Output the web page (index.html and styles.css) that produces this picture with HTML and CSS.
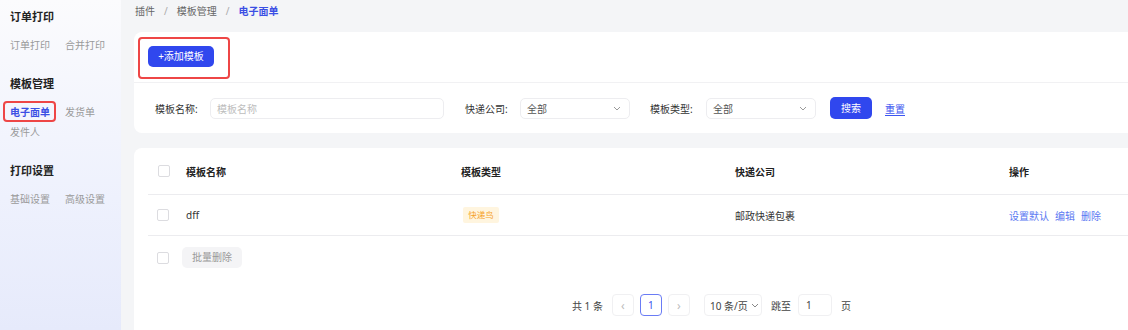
FILE: index.html
```html
<!DOCTYPE html>
<html lang="zh-CN">
<head>
<meta charset="utf-8">
<title>电子面单</title>
<link rel="stylesheet" href="styles.css">
</head>
<body>
<div class="app">
  <aside class="side">
    <div class="grp">
      <div class="grp-title">订单打印</div>
      <div class="grp-items">
        <span class="item">订单打印</span>
        <span class="item">合并打印</span>
      </div>
    </div>
    <div class="grp">
      <div class="grp-title">模板管理</div>
      <div class="grp-items">
        <span class="item active">电子面单</span>
        <span class="item">发货单</span>
        <span class="item">发件人</span>
      </div>
    </div>
    <div class="grp">
      <div class="grp-title">打印设置</div>
      <div class="grp-items">
        <span class="item">基础设置</span>
        <span class="item">高级设置</span>
      </div>
    </div>
  </aside>

  <main class="main">
    <nav class="crumb">
      <span>插件</span><span class="sep">/</span><span>模板管理</span><span class="sep">/</span><span class="cur">电子面单</span>
    </nav>

    <section class="card top-card">
      <div class="toolbar">
        <div class="mark">
          <button class="btn primary add">+添加模板</button>
        </div>
      </div>
      <div class="filters">
        <label class="lbl l1">模板名称:</label>
        <div class="input wide"><span class="ph">模板名称</span></div>
        <label class="lbl l2">快递公司:</label>
        <div class="input select"><span>全部</span>
          <svg class="chev" width="8" height="5" viewBox="0 0 8 5"><path d="M1 1l3 3 3-3" fill="none" stroke="#9a9a9a" stroke-width="1"/></svg>
        </div>
        <label class="lbl l3">模板类型:</label>
        <div class="input select"><span>全部</span>
          <svg class="chev" width="8" height="5" viewBox="0 0 8 5"><path d="M1 1l3 3 3-3" fill="none" stroke="#9a9a9a" stroke-width="1"/></svg>
        </div>
        <button class="btn primary search">搜索</button>
        <a class="reset">重置</a>
      </div>
    </section>

    <section class="card table-card">
      <div class="row head">
        <div class="c0"><span class="cb"></span></div>
        <div class="c">模板名称</div>
        <div class="c">模板类型</div>
        <div class="c">快递公司</div>
        <div class="c">操作</div>
      </div>
      <div class="row body">
        <div class="c0"><span class="cb"></span></div>
        <div class="c">dff</div>
        <div class="c"><span class="tag">快递鸟</span></div>
        <div class="c">邮政快递包裹</div>
        <div class="c ops"><a>设置默认</a><a>编辑</a><a>删除</a></div>
      </div>
      <div class="foot">
        <span class="cb"></span>
        <button class="btn ghost">批量删除</button>
      </div>
      <div class="pager">
        <span class="total">共 1 条</span>
        <span class="pg arrow">‹</span>
        <span class="pg on">1</span>
        <span class="pg arrow">›</span>
        <span class="size">10 条/页
          <svg width="8" height="5" viewBox="0 0 8 5"><path d="M1 1l3 3 3-3" fill="none" stroke="#888" stroke-width="1"/></svg>
        </span>
        <span class="jump">跳至</span>
        <span class="jin">1</span>
        <span class="unit">页</span>
      </div>
    </section>
  </main>
</div>
</body>
</html>
```

FILE: styles.css
```css
* { box-sizing: border-box; }
html, body {
  margin: 0;
  width: 1128px;
  height: 330px;
  overflow: hidden;
}
body {
  font-family: "Noto Sans", "Noto Sans CJK SC", sans-serif;
  font-size: 10px;
  color: #333;
  background: #f4f5f7;
}
button { font-family: inherit; border: 0; cursor: pointer; }

.app {
  display: flex;
  height: 330px;
  overflow: hidden;
}

/* sidebar */
.side {
  width: 121px;
  flex: none;
  padding: 8px 0 0 10px;
  background: linear-gradient(180deg, #fbfbfd 0%, #eef1fd 60%, #e6eafb 100%);
}
.grp + .grp { margin-top: 21px; }
.grp-title {
  font-size: 11px;
  font-weight: 700;
  line-height: 18px;
  color: #222;
}
.grp-items {
  margin-top: 10px;
  display: flex;
  flex-wrap: wrap;
  column-gap: 15px;
  row-gap: 2px;
  width: 110px;
}
.item {
  line-height: 18px;
  color: #9a9a9a;
  position: relative;
}
.item.active {
  color: #3b4fe4;
  font-weight: 700;
}
.item.active::after {
  content: "";
  position: absolute;
  top: -2px;
  bottom: -1px;
  left: -7px;
  right: -6px;
  border: 2px solid #ee4646;
  border-radius: 4px;
}

/* main */
.main {
  flex: 1;
  padding-left: 13px;
  margin-right: -14px;
  min-width: 0;
  display: flex;
  flex-direction: column;
  height: 330px;
}
.crumb {
  height: 32px;
  flex: none;
  padding: 4px 0 0 1px;
  line-height: 14px;
  color: #666;
}
.crumb .sep { margin: 0 9px; color: #aaa; }
.crumb .cur { color: #3b4fe4; font-weight: 700; }

.card {
  background: #fff;
  border-radius: 8px;
}
.top-card { flex: none; }
.toolbar {
  padding: 5px 0 3px 4px;
  border-bottom: 1px solid #f1f1f3;
}
.mark {
  width: 92px;
  height: 42px;
  border: 2px solid #ee4646;
  border-radius: 4px;
  padding: 7px 0 0 8px;
}
.btn {
  height: 21px;
  border-radius: 5px;
  font-size: 10px;
  line-height: 21px;
  padding: 0;
}
.btn.primary {
  background: #3047ee;
  color: #fff;
}
.btn.add { width: 66px; }

.filters {
  height: 50px;
  display: flex;
  align-items: center;
  padding-left: 21px;
}
.lbl { color: #333; }
.l1 { width: 55px; }
.l2 { width: 55px; margin-left: 21px; }
.l3 { width: 56px; margin-left: 20px; }
.input {
  height: 21px;
  border: 1px solid #ededf0;
  border-radius: 5px;
  display: flex;
  align-items: center;
  padding: 0 8px 0 6px;
  color: #555;
}
.input.wide { width: 234px; }
.ph { color: #bdbdbd; }
.input.select {
  width: 110px;
  justify-content: space-between;
}
.btn.search {
  width: 42px;
  height: 22px;
  margin-left: 14px;
}
.reset {
  margin-left: 13px;
  color: #3d56f0;
  text-decoration: underline;
  text-underline-offset: 2px;
}

/* table */
.table-card {
  margin-top: 15px;
  flex: 1;
  min-height: 0;
  border-radius: 8px 8px 0 0;
  padding: 0 0 0 14px;
}
.row {
  display: grid;
  grid-template-columns: 28px 275px 274px 274px 1fr;
  align-items: center;
  border-bottom: 1px solid #ececef;
}
.row.head { height: 47px; font-weight: 700; color: #222; }
.row.body { height: 41px; }
.c0 { padding-left: 9px; display: flex; }
.row.head .c0 { padding-left: 10px; }
.c { padding-left: 10px; }
.cb {
  display: inline-block;
  width: 12px;
  height: 12px;
  border: 1px solid #dcdce0;
  border-radius: 2px;
  background: #fff;
}
.tag {
  display: inline-block;
  margin-left: 2px;
  width: 36px;
  height: 16px;
  line-height: 16px;
  text-align: center;
  font-size: 8.5px;
  background: #fff5df;
  color: #f5a12a;
  border-radius: 2px;
}
.ops a { color: #5a78f2; margin-right: 6px; }

.foot {
  display: flex;
  align-items: center;
  padding: 11px 0 0 9px;
}
.btn.ghost {
  margin-left: 13px;
  width: 60px;
  background: #f4f4f6;
  color: #999;
}

.pager {
  display: flex;
  align-items: center;
  margin-top: 26px;
  padding-left: 424px;
  color: #444;
}
.total { margin-right: 9px; }
.pg {
  width: 22px;
  height: 22px;
  border: 1px solid #f0f0f2;
  border-radius: 4px;
  display: flex;
  align-items: center;
  justify-content: center;
  color: #bbb;
  font-size: 12px;
}
.pg + .pg { margin-left: 6px; }
.pg.on {
  border-color: #6a7cf5;
  color: #3a50ee;
  font-size: 10px;
}
.size {
  margin-left: 14px;
  width: 58px;
  height: 22px;
  border: 1px solid #f0f0f2;
  border-radius: 4px;
  display: flex;
  align-items: center;
  padding-left: 5px;
  gap: 3px;
}
.jump { margin-left: 9px; }
.jin {
  margin-left: 7px;
  width: 34px;
  height: 22px;
  border: 1px solid #f0f0f2;
  border-radius: 4px;
  display: flex;
  align-items: center;
  padding-left: 7px;
}
.unit { margin-left: 9px; }
```
